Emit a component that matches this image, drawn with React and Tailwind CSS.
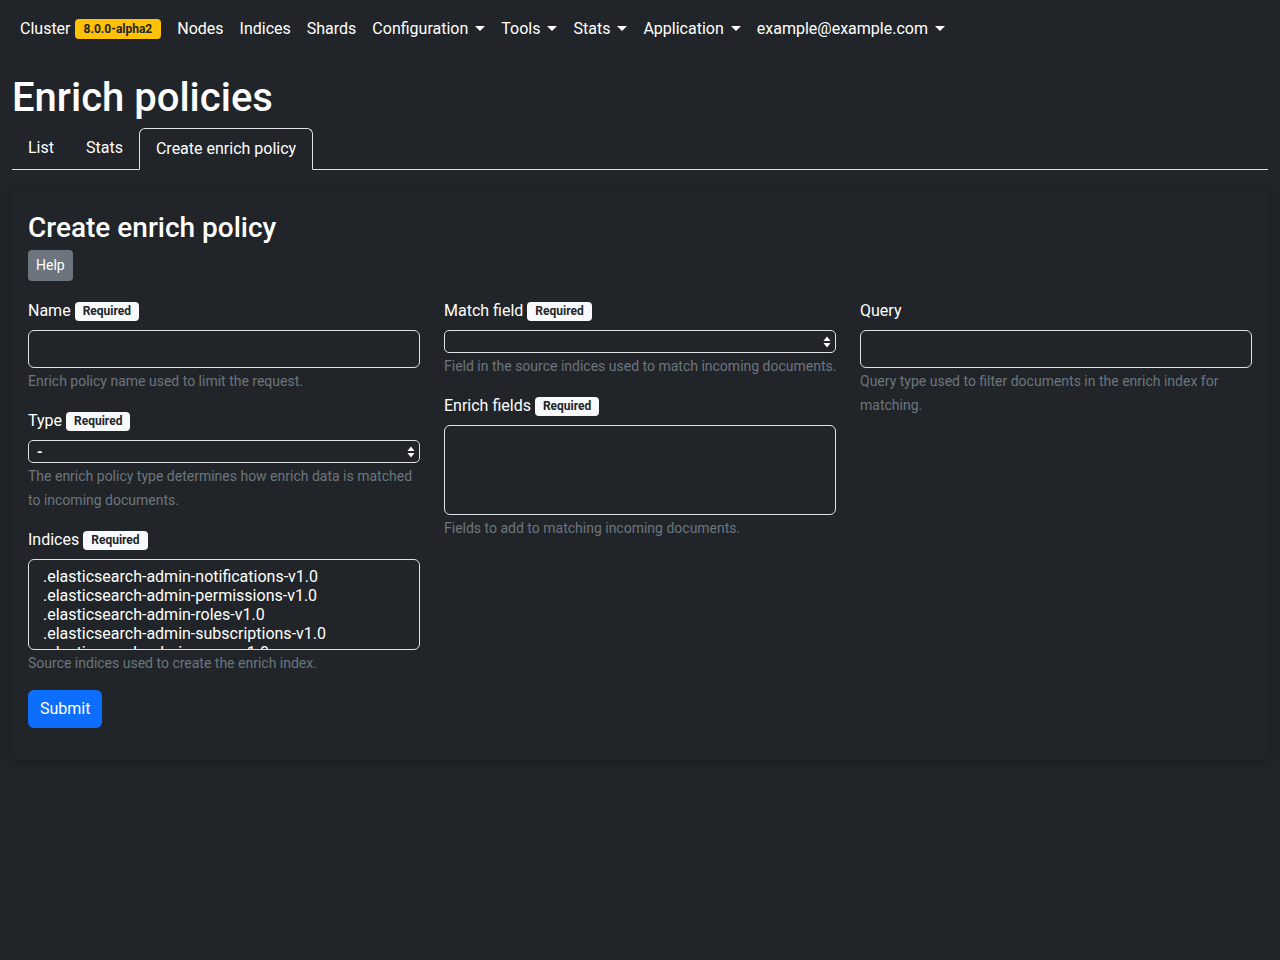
import { useState } from 'react';

const navItems = [
  { label: 'Nodes' },
  { label: 'Indices' },
  { label: 'Shards' },
  { label: 'Configuration', caret: true },
  { label: 'Tools', caret: true },
  { label: 'Stats', caret: true },
  { label: 'Application', caret: true },
  { label: 'example@example.com', caret: true },
];

const indices = [
  '.elasticsearch-admin-notifications-v1.0',
  '.elasticsearch-admin-permissions-v1.0',
  '.elasticsearch-admin-roles-v1.0',
  '.elasticsearch-admin-subscriptions-v1.0',
  '.elasticsearch-admin-users-v1.0',
];

const Caret = () => (
  <span className="ml-[7px] inline-block h-0 w-0 border-x-[5px] border-t-[5px] border-x-transparent border-t-white align-[3px]" />
);

const Required = () => (
  <span className="ml-1 inline-block rounded-[4px] bg-[#f8f9fa] px-[8px] py-[3px] align-[2px] text-xs font-bold leading-[13px] text-[#212529]">
    Required
  </span>
);

const SelectArrows = () => (
  <svg width="8" height="12" viewBox="0 0 8 12" className="shrink-0">
    <path d="M4 0.5 L7.5 5 L0.5 5 Z" fill="#fff" />
    <path d="M4 11.5 L7.5 7 L0.5 7 Z" fill="#fff" />
  </svg>
);

const Label = ({ children, required }) => (
  <div className="mb-[7px] flex items-center text-base leading-6">
    <span>{children}</span>
    {required && <Required />}
  </div>
);

const Help = ({ children, nowrap }) => (
  <div className={`mt-px text-sm leading-6 text-[#6c757d] ${nowrap ? 'whitespace-nowrap' : ''}`}>{children}</div>
);

export default function App() {
  const [tab] = useState('create');

  return (
    <div className="min-h-[960px] bg-[#212529] text-[#dee2e6] font-['Roboto',_'Liberation_Sans',_sans-serif]">
      <nav className="flex h-14 items-center px-5 pt-[2px] text-base text-white">
        <span className="flex items-center">
          Cluster
          <span className="ml-1 rounded-[4px] bg-[#ffc107] px-[9px] py-[4px] text-xs font-bold leading-3 text-[#212529]">
            8.0.0-alpha2
          </span>
        </span>
        <div className="ml-2 flex items-center">
          {navItems.map((item) => (
            <span key={item.label} className="px-2 whitespace-nowrap">
              {item.label}
              {item.caret && <Caret />}
            </span>
          ))}
        </div>
      </nav>

      <div className="px-3">
        <h1 className="mt-[18px] mb-[6px] text-[40px] font-medium leading-[48px] text-white">Enrich policies</h1>

        <div className="flex border-b border-[#dee2e6] text-base text-white">
          <span className="px-4 py-2 leading-6">List</span>
          <span className="px-4 py-2 leading-6">Stats</span>
          <span
            className={`-mb-px rounded-t-[6px] border border-[#dee2e6] border-b-[#212529] bg-[#212529] px-4 py-2 leading-6 ${
              tab === 'create' ? '' : ''
            }`}
          >
            Create enrich policy
          </span>
        </div>

        <div className="mt-4 rounded-[6px] bg-[#212529] p-4 pb-8 shadow-[0_2px_8px_rgba(0,0,0,0.25)]">
          <h3 className="mt-[9px] mb-[5px] text-[28px] font-medium leading-[34px] text-white">Create enrich policy</h3>
          <button className="mb-[18px] rounded-[4px] bg-[#6c757d] px-2 py-1 text-sm leading-[23px] text-white">
            Help
          </button>

          <div className="grid grid-cols-3 gap-6 text-white">
            <div>
              <Label required>Name</Label>
              <div className="h-[38px] rounded-[6px] border border-[#dee2e6]" />
              <Help>Enrich policy name used to limit the request.</Help>

              <div className="mt-4">
                <Label required>Type</Label>
                <div className="flex h-[23px] items-center justify-between rounded-[5px] border border-[#dee2e6] pr-[4px] pl-2 text-sm">
                  <span className="font-bold">-</span>
                  <SelectArrows />
                </div>
                <Help>The enrich policy type determines how enrich data is matched to incoming documents.</Help>
              </div>

              <div className="mt-4">
                <Label required>Indices</Label>
                <div className="h-[91px] overflow-hidden rounded-[6px] border border-[#dee2e6] pt-[7px] pl-[14px] text-base leading-[19px]">
                  {indices.map((i) => (
                    <div key={i}>{i}</div>
                  ))}
                </div>
                <Help>Source indices used to create the enrich index.</Help>
              </div>

              <button className="mt-[15px] rounded-[6px] bg-[#0d6efd] px-3 py-[7px] text-base leading-6 text-white">
                Submit
              </button>
            </div>

            <div>
              <Label required>Match field</Label>
              <div className="flex h-[23px] items-center justify-end rounded-[5px] border border-[#dee2e6] pr-[4px]">
                <SelectArrows />
              </div>
              <Help nowrap>Field in the source indices used to match incoming documents.</Help>

              <div className="mt-4">
                <Label required>Enrich fields</Label>
                <div className="h-[90px] rounded-[6px] border border-[#dee2e6]" />
                <Help>Fields to add to matching incoming documents.</Help>
              </div>
            </div>

            <div>
              <Label>Query</Label>
              <div className="h-[38px] rounded-[6px] border border-[#dee2e6]" />
              <Help>Query type used to filter documents in the enrich index for matching.</Help>
            </div>
          </div>
        </div>
      </div>
    </div>
  );
}
